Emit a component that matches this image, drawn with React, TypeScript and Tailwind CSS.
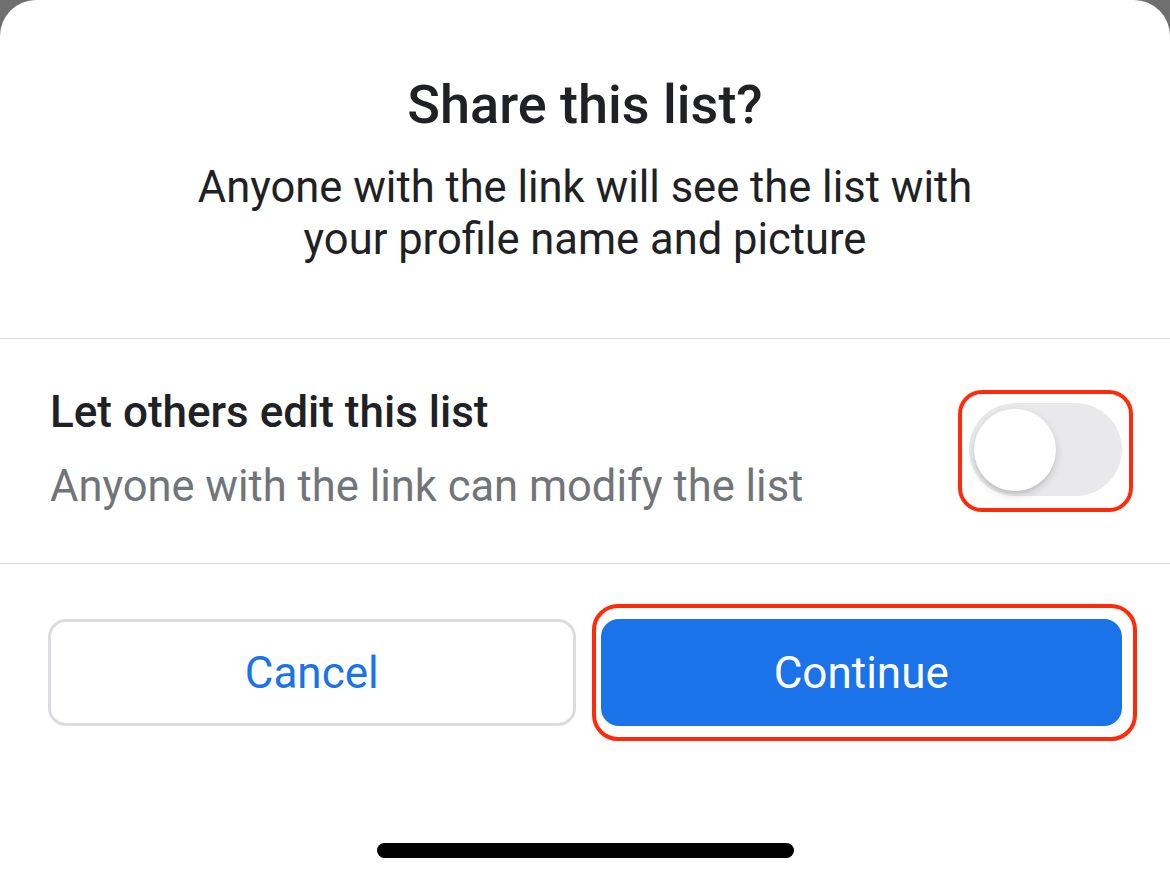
import { useState } from 'react';

export default function App() {
  const [canEdit, setCanEdit] = useState(false);

  return (
    <div className="h-[882px] w-full bg-[#6f6f6f] font-['Roboto',sans-serif]">
      <div className="flex h-full flex-col rounded-t-[36px] bg-white">
        {/* header */}
        <div className="flex flex-col items-center pt-[78px] pb-[72px] text-center">
          <h1 className="text-[54px] font-medium leading-[54px] text-[#202124]">Share this list?</h1>
          <p className="mt-[30px] text-[43.5px] leading-[52px] text-[#202124]">
            Anyone with the link will see the list with
            <br />
            your profile name and picture
          </p>
        </div>

        <div className="h-px bg-[#dadce0]" />

        {/* edit permission row */}
        <div className="flex items-center justify-between pl-[50px] pr-[48px] pt-[47px] pb-[50px]">
          <div className="flex flex-col gap-[23px]">
            <span className="text-[44px] font-medium leading-[52px] text-[#202124]">Let others edit this list</span>
            <span className="text-[43.5px] leading-[52px] text-[#70757a]">Anyone with the link can modify the list</span>
          </div>
          <div className="relative">
            <button
              onClick={() => setCanEdit(!canEdit)}
              className={`flex h-[93px] w-[153px] items-center rounded-full px-[5px] ${canEdit ? 'justify-end bg-[#1a73e8]' : 'justify-start bg-[#e9e9eb]'}`}
            >
              <span className="h-[82px] w-[82px] rounded-full bg-white shadow-[0_4px_10px_rgba(0,0,0,0.14),0_3px_1px_rgba(0,0,0,0.05)]" />
            </button>
            <div className="pointer-events-none absolute -top-[13px] -bottom-[16px] -left-[11px] -right-[11px] rounded-[24px] border-[4px] border-[#ff2a0a]" />
          </div>
        </div>

        <div className="h-px bg-[#dadce0]" />

        {/* actions */}
        <div className="flex gap-[25px] px-[48px] pt-[55px]">
          <button className="h-[107px] flex-1 rounded-[18px] border-[3px] border-[#dadce0] text-[44px] text-[#1a73e8]">
            Cancel
          </button>
          <div className="relative flex-1">
            <button className="h-[107px] w-full rounded-[18px] bg-[#1a73e8] text-[44px] text-white">
              Continue
            </button>
            <div className="pointer-events-none absolute -top-[15px] -bottom-[15px] -left-[9px] -right-[15px] rounded-[26px] border-[4px] border-[#ff2a0a]" />
          </div>
        </div>

        {/* home indicator */}
        <div className="mt-auto flex justify-center pb-[24px]">
          <div className="h-[15px] w-[417px] rounded-full bg-black" />
        </div>
      </div>
    </div>
  );
}
